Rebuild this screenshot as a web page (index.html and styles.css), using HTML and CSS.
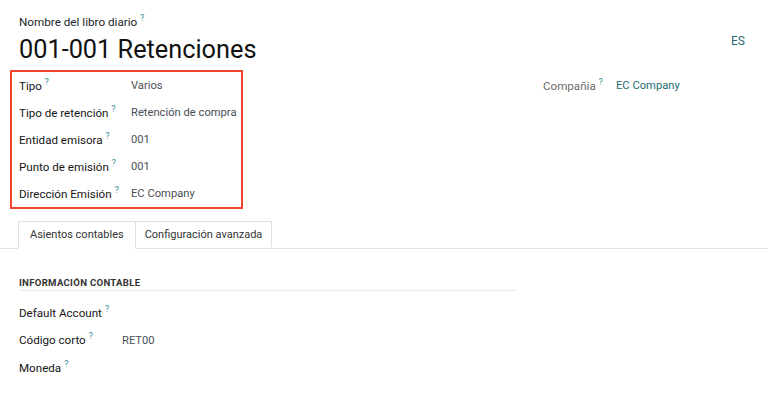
FILE: index.html
```html
<!DOCTYPE html>
<html lang="es">
  <head>
    <meta charset="UTF-8" />
    <meta name="viewport" content="width=device-width, initial-scale=1.0" />
    <title>Diario</title>
    <link rel="stylesheet" href="styles.css">
  </head>
  <body>
    <div class="hoja">
      <!-- cabecera con nombre del diario -->
      <div class="cabecera">
        <div class="titulo">
          <div class="etiquetaNombre">Nombre del libro diario<sup class="ayuda">?</sup></div>
          <h1 class="nombre">001-001 Retenciones</h1>
        </div>
        <span class="idioma">ES</span>
      </div>

      <div class="grupos">
        <div class="grupoMarcado">
          <div class="fila"><span class="etiqueta">Tipo<sup class="ayuda">?</sup></span><span class="valor">Varios</span></div>
          <div class="fila"><span class="etiqueta">Tipo de retención<sup class="ayuda">?</sup></span><span class="valor">Retención de compra</span></div>
          <div class="fila"><span class="etiqueta">Entidad emisora<sup class="ayuda">?</sup></span><span class="valor">001</span></div>
          <div class="fila"><span class="etiqueta">Punto de emisión<sup class="ayuda">?</sup></span><span class="valor">001</span></div>
          <div class="fila"><span class="etiqueta">Dirección Emisión<sup class="ayuda">?</sup></span><span class="valor">EC Company</span></div>
        </div>
        <div class="grupoDerecha">
          <div class="fila"><span class="etiqueta etiquetaClara">Compañía<sup class="ayuda">?</sup></span><span class="valor enlace">EC Company</span></div>
        </div>
      </div>

      <!-- pestañas -->
      <div class="pestanas">
        <div class="pestana activa">Asientos contables</div>
        <div class="pestana">Configuración avanzada</div>
      </div>

      <div class="seccion">
        <div class="tituloSeccion">INFORMACIÓN CONTABLE</div>
        <div class="fila corta"><span class="etiqueta">Default Account<sup class="ayuda">?</sup></span><span class="valor"></span></div>
        <div class="fila corta"><span class="etiqueta">Código corto<sup class="ayuda">?</sup></span><span class="valor">RET00</span></div>
        <div class="fila corta"><span class="etiqueta">Moneda<sup class="ayuda">?</sup></span><span class="valor"></span></div>
      </div>
    </div>
  </body>
</html>
```

FILE: styles.css
```css
body {
  margin: 0;
  background: white;
  font-family: Roboto, "Noto Sans", sans-serif;
  font-size: 12px;
  color: #212529;
}

.hoja {
  padding: 14px 0 0 0;
}

.cabecera {
  display: flex;
  justify-content: space-between;
  padding: 0 23px 0 19px;
}

.etiquetaNombre {
  font-size: 11.7px;
  line-height: 16px;
}

.nombre {
  margin: 4px 0 0 0;
  font-size: 25.3px;
  font-weight: 400;
  line-height: 32px;
  color: #111;
}

.idioma {
  margin-top: 20px;
  font-size: 12px;
  color: #1f6a70;
}

.ayuda {
  font-size: 8.5px;
  color: #2a8a8f;
  margin-left: 3px;
  vertical-align: 5px;
  line-height: 0;
}

.grupos {
  display: flex;
  margin-top: 4px;
}

.grupoMarcado {
  margin-left: 10px;
  width: 222px;
  border: 2px solid #f1452f; /* recuadro rojo */
  padding-left: 7px;
}

.grupoDerecha {
  margin-left: 300px;
  padding-top: 2px;
}

.fila {
  display: flex;
  align-items: center;
  height: 27px;
}

.etiqueta {
  width: 112px;
  flex-shrink: 0;
  font-size: 11.6px;
  color: #151515;
}

.valor {
  font-size: 11.2px;
  white-space: nowrap;
  color: #4a4f55;
}

.grupoDerecha .etiqueta {
  width: 73px;
}

.etiquetaClara {
  color: #6c6c6c;
}

.enlace {
  color: #1f6a70;
}

.pestanas {
  display: flex;
  margin-top: 12px;
  padding-left: 18px;
  border-bottom: 1px solid #dee2e6;
  font-size: 11px;
}

.pestana {
  height: 25px;
  line-height: 25px;
  padding: 0 11px;
  border: 1px solid #dee2e6;
  border-bottom: none;
  margin-bottom: -1px;
  color: #333;
}

.pestana.activa {
  border-bottom: 1px solid white;
  height: 26px;
  padding: 0 11px;
}

.pestanas .pestana + .pestana {
  border-left: none;
  margin-bottom: 0;
  padding: 0 9px;
}

.seccion {
  padding: 28px 0 0 19px;
  width: 497px;
}

.tituloSeccion {
  font-size: 9.6px;
  font-weight: 700;
  letter-spacing: 0.3px;
  color: #333;
  padding-bottom: 2px;
  border-bottom: 1px solid #e9ecef;
  margin-bottom: 8px;
}

.fila.corta {
  height: 27.5px;
}

.corta .etiqueta {
  width: 103px;
}
```
